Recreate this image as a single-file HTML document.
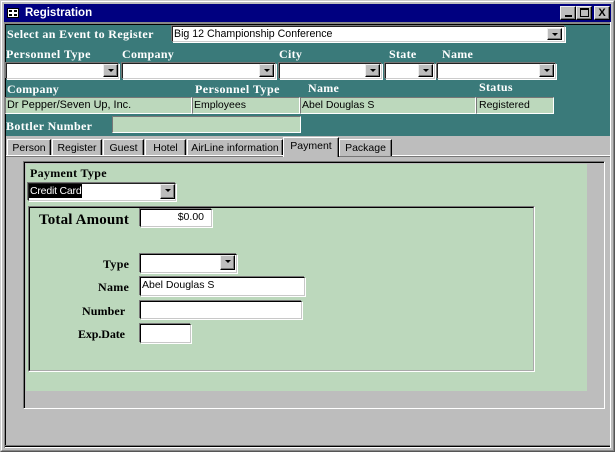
<!DOCTYPE html>
<html>
<head>
<meta charset="utf-8">
<style>
html,body{margin:0;padding:0;}
body{width:615px;height:452px;overflow:hidden;position:relative;background:#bdbdbd;}
div,span{position:absolute;box-sizing:border-box;}
.l{font:bold 12px "Liberation Serif",serif;color:#fff;white-space:nowrap;line-height:14px;}
.d{color:#000;}
.t{font:10.5px "Liberation Sans",sans-serif;color:#000;white-space:nowrap;line-height:14px;}
.s{background:#fff;border-style:solid;border-width:1px;border-color:#000 #c8c8c8 #c8c8c8 #000;box-shadow:-1px -1px 0 #777,1px 1px 0 #fff;}
.c{background:#fff;border-style:solid;border-width:1px;border-color:#222 #ccc #ccc #222;box-shadow:-1px -1px 0 #777,1px 1px 0 #fff;}
.g{background:#bcd8bc;border:1px solid;border-color:#777 #fff #fff #777;}
.b{width:15px;background:#bdbdbd;border:1px solid;border-color:#eee #000 #000 #eee;box-shadow:inset -1px -1px 0 #777;}
.b:after{content:"";position:absolute;left:4px;top:4px;border-style:solid;border-width:3px 3px 0 3px;border-color:#000 transparent transparent transparent;}
.tab{top:139px;height:17px;background:#bdbdbd;border-top:1px solid #fff;border-left:1px solid #fff;border-right:1px solid #000;box-shadow:inset -1px 0 0 #777;text-align:center;font:10.5px/16px "Liberation Sans",sans-serif;color:#000;white-space:nowrap;}
.w{background:#bdbdbd;border:1px solid;border-color:#eee #000 #000 #eee;box-shadow:inset -1px -1px 0 #777;width:16px;height:14px;top:6px;}
</style>
</head>
<body>
<!-- window frame -->
<div style="left:0;top:0;width:615px;height:452px;border:1px solid;border-color:#ccc #555 #555 #ccc;"></div>
<div style="left:1px;top:1px;width:613px;height:450px;border:1px solid;border-color:#fff #888 #888 #fff;"></div>
<!-- title bar -->
<div style="left:4px;top:4px;width:607px;height:18px;background:#000080;"></div>
<div style="left:7px;top:8px;width:12px;height:10px;background:#fff;border:1px solid #000;"></div>
<div style="left:9px;top:10px;width:3px;height:2px;background:#000;"></div>
<div style="left:14px;top:10px;width:3px;height:2px;background:#000;"></div>
<div style="left:9px;top:14px;width:3px;height:2px;background:#000;"></div>
<div style="left:14px;top:14px;width:3px;height:2px;background:#000;"></div>
<div style="left:25px;top:5px;font:bold 11.5px/16px 'Liberation Sans',sans-serif;color:#fff;white-space:nowrap;">Registration</div>
<div class="w" style="left:560px;"><span style="left:4px;bottom:2px;width:7px;height:2px;background:#000;"></span></div>
<div class="w" style="left:576px;"><span style="left:3px;top:1px;width:9px;height:9px;border:1px solid #000;border-top-width:2px;"></span></div>
<div class="w" style="left:594px;font:bold 11px/12px 'Liberation Sans',sans-serif;text-align:center;color:#000;">X</div>
<!-- client sunken frame -->
<div style="left:4px;top:22px;width:607px;height:3px;background:#888;border-bottom:1px solid #000;"></div>
<div style="left:4px;top:22px;width:1px;height:426px;background:#888;"></div>
<div style="left:5px;top:24px;width:1px;height:423px;background:#000;"></div>
<div style="left:5px;top:446px;width:605px;height:1px;background:#000;"></div>
<div style="left:5px;top:445px;width:605px;height:1px;background:#777;"></div>
<div style="left:5px;top:447px;width:606px;height:1px;background:#fff;"></div>
<div style="left:610px;top:22px;width:1px;height:426px;background:#fff;"></div>
<!-- teal header -->
<div style="left:6px;top:25px;width:604px;height:111px;background:#3a7a7a;"></div>

<div class="l" style="left:7px;top:27px;letter-spacing:.35px;">Select an Event to Register</div>
<div class="c" style="left:172px;top:26px;width:393px;height:16px;"></div>
<div class="t" style="left:174px;top:27px;font-size:10.6px;">Big 12 Championship Conference</div>
<div class="b" style="left:547px;top:28px;height:12px;"></div>

<div class="l" style="left:6px;top:47px;letter-spacing:.45px;">Personnel Type</div>
<div class="l" style="left:122px;top:47px;letter-spacing:.3px;">Company</div>
<div class="l" style="left:279px;top:47px;letter-spacing:.3px;">City</div>
<div class="l" style="left:389px;top:47px;letter-spacing:.3px;">State</div>
<div class="l" style="left:442px;top:47px;letter-spacing:.3px;">Name</div>

<div class="c" style="left:6px;top:63px;width:113px;height:16px;"></div>
<div class="b" style="left:103px;top:64px;height:13px;"></div>
<div class="c" style="left:122px;top:63px;width:154px;height:16px;"></div>
<div class="b" style="left:259px;top:64px;height:13px;"></div>
<div class="c" style="left:279px;top:63px;width:103px;height:16px;"></div>
<div class="b" style="left:365px;top:64px;height:13px;"></div>
<div class="c" style="left:385px;top:63px;width:50px;height:16px;"></div>
<div class="b" style="left:418px;top:64px;height:13px;"></div>
<div class="c" style="left:437px;top:63px;width:119px;height:16px;"></div>
<div class="b" style="left:539px;top:64px;height:13px;"></div>

<div class="l" style="left:7px;top:82px;letter-spacing:.3px;">Company</div>
<div class="l" style="left:195px;top:82px;letter-spacing:.45px;">Personnel Type</div>
<div class="l" style="left:308px;top:81px;letter-spacing:.3px;">Name</div>
<div class="l" style="left:479px;top:80px;letter-spacing:.3px;">Status</div>

<div class="g" style="left:5px;top:97px;width:187px;height:17px;"></div>
<div class="t" style="left:7px;top:98px;font-size:10.9px;">Dr Pepper/Seven Up, Inc.</div>
<div class="g" style="left:192px;top:97px;width:108px;height:17px;"></div>
<div class="t" style="left:194px;top:98px;">Employees</div>
<div class="g" style="left:300px;top:97px;width:176px;height:17px;"></div>
<div class="t" style="left:302px;top:98px;">Abel Douglas S</div>
<div class="g" style="left:476px;top:97px;width:78px;height:17px;"></div>
<div class="t" style="left:479px;top:98px;">Registered</div>

<div class="l" style="left:6px;top:119px;letter-spacing:.35px;">Bottler Number</div>
<div class="g" style="left:112px;top:116px;width:189px;height:17px;"></div>

<!-- tabs -->
<div class="tab" style="left:7px;width:44px;">Person</div>
<div class="tab" style="left:52px;width:50px;">Register</div>
<div class="tab" style="left:103px;width:41px;">Guest</div>
<div class="tab" style="left:145px;width:41px;">Hotel</div>
<div class="tab" style="left:187px;width:96px;">AirLine information</div>
<div style="left:6px;top:155px;width:604px;height:1px;background:#fff;"></div>
<div style="left:6px;top:156px;width:604px;height:1px;background:#777;"></div>
<div class="tab" style="left:283px;top:137px;width:56px;height:20px;line-height:16px;">Payment</div>
<div class="tab" style="left:339px;width:53px;">Package</div>

<!-- page frame -->
<div style="left:23px;top:161px;width:582px;height:248px;border:1px solid;border-color:#777 #fff #fff #777;"></div>
<div style="left:24px;top:162px;width:580px;height:246px;border:solid #000;border-width:1px 0 0 1px;"></div>
<div style="left:26px;top:164px;width:561px;height:227px;background:#bcd8bc;"></div>

<div class="l d" style="left:30px;top:166px;letter-spacing:.3px;">Payment Type</div>
<div class="c" style="left:28px;top:183px;width:148px;height:18px;"></div>
<div style="left:29px;top:184px;width:53px;height:14px;background:#000;"></div>
<div class="t" style="left:30px;top:184px;color:#fff;letter-spacing:-.2px;">Credit Card</div>
<div class="b" style="left:160px;top:184px;height:15px;"></div>

<div style="left:28px;top:206px;width:507px;height:166px;border:1px solid;border-color:#777 #fff #fff #777;"></div>
<div style="left:29px;top:207px;width:505px;height:164px;border:1px solid;border-color:#000 #aaa #aaa #000;"></div>

<div class="l d" style="left:39px;top:212px;font-size:15px;line-height:17px;letter-spacing:.15px;">Total Amount</div>
<div class="s" style="left:140px;top:209px;width:72px;height:18px;"></div>
<div class="t" style="left:141px;top:210px;width:63px;text-align:right;">$0.00</div>

<div class="l d" style="left:103px;top:257px;letter-spacing:.3px;">Type</div>
<div class="s" style="left:140px;top:254px;width:97px;height:19px;"></div>
<div class="b" style="left:220px;top:255px;height:15px;"></div>

<div class="l d" style="left:98px;top:280px;letter-spacing:.3px;">Name</div>
<div class="s" style="left:140px;top:277px;width:165px;height:19px;"></div>
<div class="t" style="left:142px;top:278px;">Abel Douglas S</div>

<div class="l d" style="left:82px;top:304px;letter-spacing:.1px;">Number</div>
<div class="s" style="left:140px;top:301px;width:162px;height:18px;"></div>

<div class="l d" style="left:78px;top:327px;letter-spacing:-.1px;">Exp.Date</div>
<div class="s" style="left:140px;top:324px;width:51px;height:19px;"></div>
</body>
</html>
